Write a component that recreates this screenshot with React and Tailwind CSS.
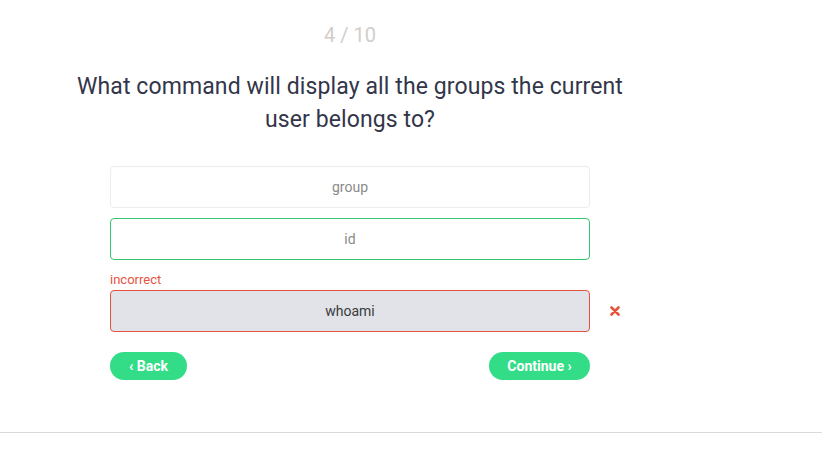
import React from "react";

const font = { fontFamily: "Roboto, 'Liberation Sans', sans-serif" };

const Option = ({ label, tone }) => {
  const tones = {
    plain: "border-[#ececec] bg-white text-[#8a8a8a]",
    correct: "border-[#34c76f] bg-white text-[#8a8a8a]",
    wrong: "border-[#e5533f] bg-[#e2e3e8] text-[#3a3a3a]",
  };
  return (
    <div
      className={`h-[42px] w-full rounded-[4px] border flex items-center justify-center text-[14px] ${tones[tone]}`}
    >
      {label}
    </div>
  );
};

export default function App() {
  return (
    <div className="min-h-screen bg-white" style={font}>
      <div className="w-[700px] flex flex-col items-center pt-[22px]">
        {/* COUNTER */}
        <div className="text-[20px] leading-[26px] text-[#d2cdc9]">4 / 10</div>

        {/* QUESTION */}
        <h1 className="mt-[22px] w-[580px] text-center text-[23px] leading-[33px] tracking-[0.1px] text-[#33364a]">
          What command will display all the groups the current user belongs to?
        </h1>

        {/* OPTIONS */}
        <div className="mt-[30px] w-[480px] flex flex-col">
          <Option label="group" tone="plain" />
          <div className="mt-[10px]">
            <Option label="id" tone="correct" />
          </div>
          <div className="mt-[12px] text-[13px] leading-[16px] text-[#e5533f]">incorrect</div>
          <div className="relative mt-[2px]">
            <Option label="whoami" tone="wrong" />
            <svg
              className="absolute left-[500px] top-[16px]"
              width="10"
              height="10"
              viewBox="0 0 10 10"
            >
              <path d="M1.5 1.5 L8.5 8.5 M8.5 1.5 L1.5 8.5" stroke="#e5533f" strokeWidth="2.6" strokeLinecap="round" />
            </svg>
          </div>

          {/* NAV */}
          <div className="mt-[20px] flex justify-between">
            <button className="h-[28px] w-[77px] rounded-full bg-[#33dd88] text-white text-[14px] font-bold">
              ‹ Back
            </button>
            <button className="h-[28px] w-[101px] rounded-full bg-[#33dd88] text-white text-[14px] font-bold">
              Continue ›
            </button>
          </div>
        </div>
      </div>

      <div className="mt-[52px] border-t border-[#dadada]" />
    </div>
  );
}
